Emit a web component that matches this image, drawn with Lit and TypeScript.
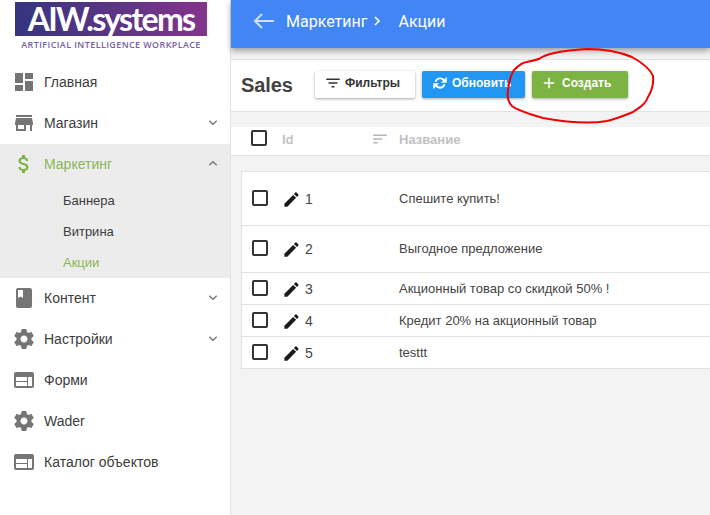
import { LitElement, html, css, svg } from "lit";
import { customElement } from "lit/decorators.js";

const ICONS: Record<string, string> = {
    dashboard: "M3 13h8V3H3v10zm0 8h8v-6H3v6zm10 0h8V11h-8v10zm0-18v6h8V3h-8z",
    store: "M20 4H4v2h16V4zm1 10v-2l-1-5H4l-1 5v2h1v6h10v-6h4v6h2v-6h1zm-9 4H6v-4h6v4z",
    money: "M11.8 10.9c-2.27-.59-3-1.2-3-2.15 0-1.09 1.01-1.85 2.7-1.85 1.78 0 2.44.85 2.5 2.1h2.21c-.07-1.72-1.12-3.3-3.21-3.81V3h-3v2.16c-1.94.42-3.5 1.68-3.5 3.61 0 2.31 1.91 3.46 4.7 4.13 2.5.6 3 1.48 3 2.41 0 .69-.49 1.79-2.7 1.79-2.06 0-2.87-.92-2.98-2.1h-2.2c.12 2.19 1.76 3.42 3.68 3.83V21h3v-2.15c1.95-.37 3.5-1.5 3.5-3.55 0-2.84-2.43-3.81-4.7-4.4z",
    book: "M18 2H6c-1.1 0-2 .9-2 2v16c0 1.1.9 2 2 2h12c1.1 0 2-.9 2-2V4c0-1.1-.9-2-2-2zM6 4h5v8l-2.5-1.5L6 12V4z",
    settings: "M19.43 12.98c.04-.32.07-.64.07-.98s-.03-.66-.07-.98l2.11-1.65c.19-.15.24-.42.12-.64l-2-3.46c-.12-.22-.39-.3-.61-.22l-2.49 1c-.52-.4-1.08-.73-1.69-.98l-.38-2.65C14.46 2.18 14.25 2 14 2h-4c-.25 0-.46.18-.49.42l-.38 2.65c-.61.25-1.17.59-1.69.98l-2.49-1c-.23-.09-.49 0-.61.22l-2 3.46c-.13.22-.07.49.12.64l2.11 1.65c-.04.32-.07.65-.07.98s.03.66.07.98l-2.11 1.65c-.19.15-.24.42-.12.64l2 3.46c.12.22.39.3.61.22l2.49-1c.52.4 1.08.73 1.69.98l.38 2.65c.03.24.24.42.49.42h4c.25 0 .46-.18.49-.42l.38-2.65c.61-.25 1.17-.59 1.69-.98l2.49 1c.23.09.49 0 .61-.22l2-3.46c.12-.22.07-.49-.12-.64l-2.11-1.65zM12 15.5c-1.93 0-3.5-1.57-3.5-3.5s1.57-3.5 3.5-3.5 3.5 1.57 3.5 3.5-1.57 3.5-3.5 3.5z",
    web: "M20 4H4c-1.1 0-1.99.9-1.99 2L2 18c0 1.1.9 2 2 2h16c1.1 0 2-.9 2-2V6c0-1.1-.9-2-2-2zm-5 14H4v-4h11v4zm0-5H4V9h11v4zm5 5h-4V9h4v9z",
    edit: "M3 17.25V21h3.75L17.81 9.94l-3.75-3.75L3 17.25zM20.71 7.04c.39-.39.39-1.02 0-1.41l-2.34-2.34c-.39-.39-1.02-.39-1.41 0l-1.83 1.83 3.75 3.75 1.83-1.83z",
    filter: "M10 18h4v-2h-4v2zM3 6v2h18V6H3zm3 7h12v-2H6v2z",
    sort: "M3 18h6v-2H3v2zM3 6v2h18V6H3zm0 7h12v-2H3v2z",
    refresh: "M12 4.5c-3.5 0-6.4 2.4-7.2 5.6l2.5.6C7.9 8.6 9.8 7 12 7c1.6 0 3 .7 3.9 1.9L13.2 11.6H21V3.8l-3.2 3.2C16.3 5.5 14.3 4.5 12 4.5zM3 12.4v7.8l3.2-3.2c1.5 1.5 3.5 2.5 5.8 2.5 3.5 0 6.4-2.4 7.2-5.6l-2.5-.6C16.1 15.4 14.2 17 12 17c-1.6 0-3-.7-3.9-1.9l2.7-2.7H3z",
    add: "M19 13h-6v6h-2v-6H5v-2h6V5h2v6h6v2z",
};

const icon = (name: string, cls = "") =>
    html`<svg class="ico ${cls}" viewBox="0 0 24 24"><path d=${ICONS[name]}></path></svg>`;

const chevron = (up: boolean) =>
    html`<svg class="chev" viewBox="0 0 12 8">
        <path d=${up ? "M1.5 6 6 1.8 10.5 6" : "M1.5 2 6 6.2 10.5 2"}></path>
    </svg>`;

@customElement("app-root")
export class AppRoot extends LitElement {
    static styles = css`
        :host {
            display: flex;
            width: 710px;
            height: 515px;
            overflow: hidden;
            position: relative;
            background: #f3f3f3;
            font-family: "Liberation Sans", Arial, sans-serif;
            color: #333;
        }

        .ico {
            fill: currentColor;
            display: block;
            flex: none;
        }

        /* sidebar */
        .sidebar {
            width: 230px;
            flex: none;
            background: #fff;
            border-right: 1px solid #e2e2e2;
        }
        .logo {
            height: 62px;
            display: flex;
            flex-direction: column;
            padding: 2px 0 0 15px;
            box-sizing: border-box;
        }
        .logo-box {
            width: 192px;
            height: 34px;
            background: linear-gradient(90deg, #35357f 0%, #5a3584 50%, #84348c 100%);
            color: #fff;
            font-family: Lato, sans-serif;
            font-weight: 700;
            font-size: 32px;
            line-height: 33px;
            letter-spacing: -1.7px;
            text-align: center;
        }
        .logo-sub {
            width: 192px;
            margin-top: 3px;
            font-family: "Open Sans", sans-serif;
            font-weight: 600;
            font-size: 8.9px;
            line-height: 12px;
            letter-spacing: 0.45px;
            color: #76609f;
            text-align: center;
            white-space: nowrap;
        }
        .item {
            height: 41px;
            box-sizing: border-box;
            padding: 0 0 2px 12px;
            display: flex;
            align-items: center;
            font-size: 14px;
            color: #3c3c3c;
        }
        .item .ico {
            width: 24px;
            height: 24px;
            color: #757575;
            margin-right: 8px;
        }
        .item .label {
            flex: 1;
        }
        .chev {
            width: 10px;
            height: 7px;
            margin-right: 12px;
            fill: none;
            stroke: #757575;
            stroke-width: 1.6;
        }
        .group {
            background: #ececec;
        }
        .group .item {
            color: #8bb755;
        }
        .group .item .ico {
            color: #7cb342;
        }
        .sub {
            height: 31px;
            display: flex;
            align-items: center;
            padding-left: 63px;
            font-size: 13px;
            color: #3c3c3c;
        }
        .sub.active {
            color: #8bb755;
        }

        /* main */
        .main {
            flex: 1;
            min-width: 0;
            display: flex;
            flex-direction: column;
        }
        .topbar {
            height: 48px;
            flex: none;
            box-sizing: border-box;
            background: #4285f4;
            box-shadow: 0 3px 6px rgba(0, 0, 0, 0.35);
            display: flex;
            align-items: center;
            padding: 0 0 6px 22px;
            color: #fff;
            font-family: Roboto, sans-serif;
            font-size: 16px;
            position: relative;
        }
        .topbar .back {
            width: 22px;
            height: 16px;
            fill: none;
            stroke: #cfdffc;
            stroke-width: 2;
            margin-right: 11px;
        }
        .topbar .sep {
            width: 7px;
            height: 10px;
            fill: none;
            stroke: #fff;
            stroke-width: 1.6;
            margin: 0 17px 0 7px;
        }
        .toolbar {
            margin-top: 11px;
            height: 53px;
            flex: none;
            box-sizing: border-box;
            background: #fff;
            border-top: 1px solid #e2e2e2;
            border-bottom: 1px solid #e2e2e2;
            display: flex;
            align-items: center;
            padding-left: 10px;
            padding-bottom: 3px;
        }
        .toolbar h1 {
            margin: 3px 22px 0 0;
            font-size: 20px;
            font-weight: 700;
            color: #424242;
            width: 52px;
            letter-spacing: -0.1px;
        }
        .btn {
            height: 27px;
            box-sizing: border-box;
            border-radius: 2px;
            display: flex;
            align-items: center;
            padding-bottom: 2px;
            font-size: 12px;
            font-weight: 700;
            box-shadow: 0 1px 3px rgba(0, 0, 0, 0.35);
            white-space: nowrap;
        }
        .btn .ico {
            width: 18px;
            height: 18px;
        }
        .btn-filter {
            width: 100px;
            background: #fff;
            color: #333;
            padding-left: 9px;
            gap: 3px;
            margin-right: 7px;
        }
        .btn-refresh {
            width: 103px;
            background: #2196f3;
            color: #fff;
            padding-left: 9px;
            gap: 3px;
            margin-right: 7px;
        }
        .btn-create {
            width: 96px;
            background: #7cb342;
            color: #fff;
            padding-left: 8px;
            gap: 4px;
        }
        .thead {
            margin-top: 15px;
            height: 29px;
            flex: none;
            box-sizing: border-box;
            padding-bottom: 4px;
            background: #fff;
            border-bottom: 1px solid #e2e2e2;
            display: grid;
            grid-template-columns: 51px 90px 27px 1fr;
            align-items: center;
            font-size: 13px;
            font-weight: 700;
            color: #c2c2c2;
        }
        .check {
            width: 16px;
            height: 16px;
            box-sizing: border-box;
            border: 2px solid #333;
            border-radius: 2px;
            margin-left: 20px;
            background: #fff;
        }
        .thead .check {
            margin-bottom: 2px;
        }
        .thead .ico {
            width: 18px;
            height: 18px;
            margin-left: -1px;
            color: #b5b5b5;
        }
        .table {
            margin: 15px 0 0 10px;
            background: #fff;
            border: 1px solid #e2e2e2;
            border-right: none;
        }
        .row {
            display: grid;
            grid-template-columns: 40px 22px 95px 1fr;
            align-items: center;
            color: #444;
            border-bottom: 1px solid #e2e2e2;
            box-sizing: border-box;
            height: 32px;
        }
        .row:last-child {
            height: 31px;
            border-bottom: none;
        }
        .row .check {
            margin: 0 0 2px 10px;
        }
        .row .ico {
            width: 19px;
            height: 19px;
            margin-top: 1px;
            color: #1a1a1a;
        }
        .row .num {
            font-size: 14px;
            padding-left: 1px;
        }
        .row .title {
            font-size: 13px;
            margin-bottom: 1px;
        }
        .row.tall1 {
            height: 54px;
        }
        .row.tall2 {
            height: 47px;
        }

        .scribble {
            position: absolute;
            left: 0;
            top: 0;
            width: 710px;
            height: 515px;
            pointer-events: none;
            fill: none;
            stroke: #f00000;
            stroke-width: 2;
        }
    `;

    private renderRow(num: number, title: string, cls = "") {
        return html`<div class="row ${cls}">
            <div class="check"></div>
            ${icon("edit")}
            <div class="num">${num}</div>
            <div class="title">${title}</div>
        </div>`;
    }

    render() {
        return html`
            <aside class="sidebar">
                <div class="logo">
                    <div class="logo-box">AIW.systems</div>
                    <div class="logo-sub">ARTIFICIAL INTELLIGENCE WORKPLACE</div>
                </div>
                <div class="item">${icon("dashboard")}<span class="label">Главная</span></div>
                <div class="item">${icon("store")}<span class="label">Магазин</span>${chevron(false)}</div>
                <div class="group">
                    <div class="item">${icon("money")}<span class="label">Маркетинг</span>${chevron(true)}</div>
                    <div class="sub">Баннера</div>
                    <div class="sub">Витрина</div>
                    <div class="sub active">Акции</div>
                </div>
                <div class="item">${icon("book")}<span class="label">Контент</span>${chevron(false)}</div>
                <div class="item">${icon("settings")}<span class="label">Настройки</span>${chevron(false)}</div>
                <div class="item">${icon("web")}<span class="label">Форми</span></div>
                <div class="item">${icon("settings")}<span class="label">Wader</span></div>
                <div class="item">${icon("web")}<span class="label">Каталог объектов</span></div>
            </aside>
            <main class="main">
                <header class="topbar">
                    <svg class="back" viewBox="0 0 22 16"><path d="M21 8H2M9 1 2 8l7 7"></path></svg>
                    <span>Маркетинг</span>
                    <svg class="sep" viewBox="0 0 7 10"><path d="M1 1l4 4-4 4"></path></svg>
                    <span>Акции</span>
                </header>
                <div class="toolbar">
                    <h1>Sales</h1>
                    <div class="btn btn-filter">${icon("filter")}Фильтры</div>
                    <div class="btn btn-refresh">${icon("refresh")}Обновить</div>
                    <div class="btn btn-create">${icon("add")}Создать</div>
                </div>
                <div class="thead">
                    <div class="check"></div>
                    <div>Id</div>
                    ${icon("sort")}
                    <div>Название</div>
                </div>
                <div class="table">
                    ${this.renderRow(1, "Спешите купить!", "tall1")}
                    ${this.renderRow(2, "Выгодное предложение", "tall2")}
                    ${this.renderRow(3, "Акционный товар со скидкой 50% !")}
                    ${this.renderRow(4, "Кредит 20% на акционный товар")}
                    ${this.renderRow(5, "testtt")}
                </div>
            </main>
            <svg class="scribble" viewBox="0 0 710 515">
                ${svg`<path d="M539 59C545 54 557 51 587 49C605 49 620 52 632 57C641 62 650 68 653 76C654 85 651 92 648 97C646 103 642 106 633 112C625 115 616 119 607 121C590 124 565 122 543 118C530 114 518 111 512 106C508 102 507 96 508 90C509 82 510 76 514 70C518 66 522 62 527 62C531 61 536 60 539 59Z"></path>`}
            </svg>
        `;
    }
}
